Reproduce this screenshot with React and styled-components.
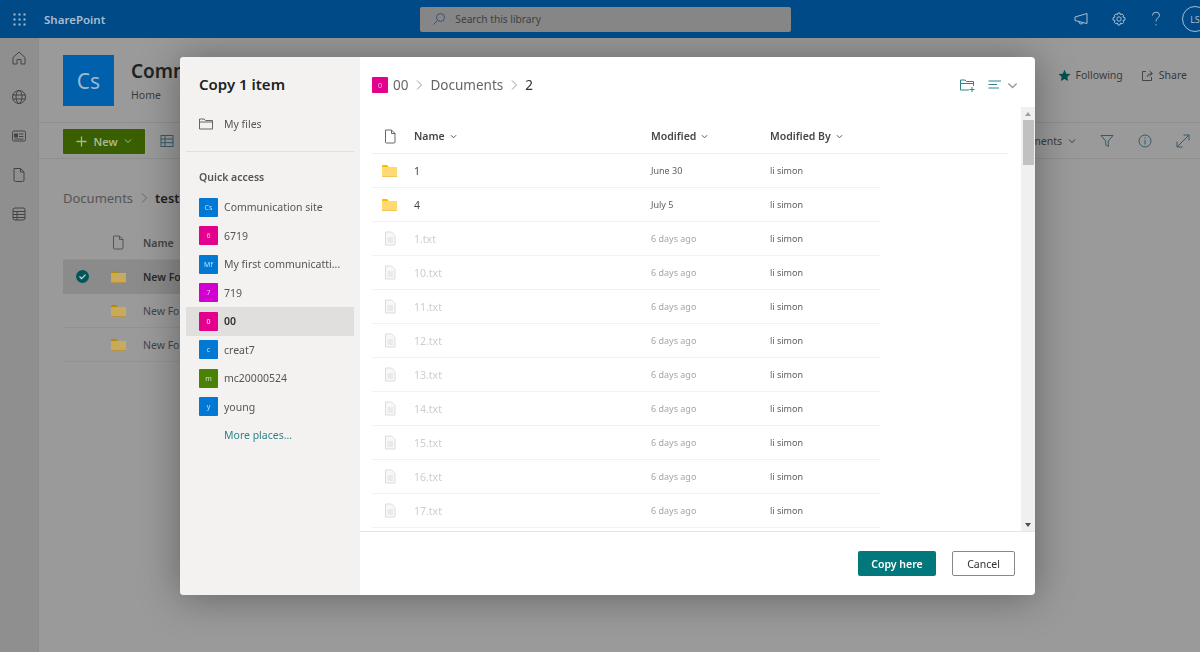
import React from "react";
import styled, { createGlobalStyle } from "styled-components";

const GlobalStyle = createGlobalStyle`
  html, body { margin: 0; padding: 0; height: 100%; overflow: hidden; }
  body { font-family: "Noto Sans", "Open Sans", "Liberation Sans", sans-serif; color: #323130; }
  * { box-sizing: border-box; }
`;

const Page = styled.div`
  width: 1200px;
  height: 652px;
  position: relative;
  overflow: hidden;
  background: #9a9a9a;
  display: flex;
  flex-direction: column;
`;

const TopBar = styled.header`
  height: 38px;
  flex: none;
  background: #004b87;
  display: flex;
  align-items: center;
  position: relative;
  z-index: 2;
  color: #a9bdcf;
`;

const Waffle = styled.div`
  width: 38px;
  display: flex;
  justify-content: center;
`;

const BrandName = styled.span`
  font-size: 11.5px;
  font-weight: 600;
  margin-left: 6px;
`;

const SearchBox = styled.div`
  width: 371px;
  height: 25px;
  margin-left: 315px;
  background: #868686;
  border-radius: 2px;
  display: flex;
  align-items: center;
  gap: 9px;
  padding-left: 12px;
  font-size: 10.2px;
  color: #404040;
`;

const BarActions = styled.div`
  margin-left: auto;
  display: flex;
  align-items: center;
  gap: 23px;
  margin-right: -8px;
`;

const Avatar = styled.div`
  width: 26px;
  height: 26px;
  border-radius: 50%;
  border: 1px solid #a9bdcf;
  font-size: 9px;
  display: flex;
  align-items: center;
  justify-content: center;
  margin-left: -4px;
`;

const Body = styled.div`
  flex: 1;
  display: flex;
  min-height: 0;
`;

const Rail = styled.nav`
  width: 39px;
  flex: none;
  background: #8f8f8f;
  display: flex;
  flex-direction: column;
  align-items: center;
  gap: 23px;
  padding-top: 12px;
  color: #444;
  border-right: 1px solid #8a8a8a;
`;

const Main = styled.main`
  flex: 1;
  min-width: 0;
  display: flex;
  flex-direction: column;
`;

const SiteHeader = styled.div`
  height: 85px;
  flex: none;
  display: flex;
  padding: 17px 13px 0 24px;
  border-bottom: 1px solid #8e8e8e;
`;

const SiteLogo = styled.div`
  width: 51px;
  height: 51px;
  background: #0060ab;
  color: #9fb8cc;
  font-size: 21px;
  display: flex;
  align-items: center;
  justify-content: center;
  flex: none;
`;

const SiteText = styled.div`
  margin-left: 17px;
  display: flex;
  flex-direction: column;
`;

const SiteTitle = styled.div`
  font-size: 19px;
  font-weight: 600;
  color: #222;
  line-height: 30px;
  margin-top: 1px;
  white-space: nowrap;
`;

const SiteNav = styled.div`
  font-size: 10.5px;
  color: #3a3a3a;
  line-height: 18px;
`;

const SiteActions = styled.div`
  margin-left: auto;
  display: flex;
  align-items: flex-start;
  gap: 18px;
  padding-top: 13px;
`;

const SiteAction = styled.span`
  display: flex;
  align-items: center;
  gap: 5px;
  font-size: 10.5px;
  color: #3a3a3a;
`;

const CommandBar = styled.div`
  height: 36px;
  flex: none;
  display: flex;
  align-items: center;
  padding: 1px 10px 0 24px;
  border-bottom: 1px solid #8e8e8e;
  color: #444;
`;

const NewButton = styled.div`
  width: 82px;
  height: 25px;
  background: #3a5f00;
  color: #a8b892;
  font-size: 11px;
  font-weight: 600;
  display: flex;
  align-items: center;
  justify-content: center;
  gap: 6px;
  border-radius: 1px;
  margin-right: 15px;
`;

const CommandRight = styled.div`
  margin-left: auto;
  display: flex;
  align-items: center;
  gap: 24px;
`;

const ViewName = styled.span`
  display: flex;
  align-items: center;
  gap: 6px;
  font-size: 10.5px;
  color: #3a3a3a;
`;

const PageCrumb = styled.div`
  display: flex;
  align-items: center;
  gap: 5px;
  padding: 29px 0 0 24px;
  font-size: 13px;
  line-height: 20px;
  color: #555;
`;

const CrumbStrong = styled.span`
  color: #222;
  font-weight: 600;
`;

const BackList = styled.div`
  margin: 18px 0 0 24px;
  width: 500px;
`;

const BackRow = styled.div`
  height: 34px;
  display: flex;
  align-items: center;
  font-size: 10.5px;
  color: ${(p) => (p.$strong ? "#2a2a2a" : "#444")};
  font-weight: ${(p) => (p.$strong ? 600 : 400)};
  background: ${(p) => (p.$selected ? "#8b8b8b" : "transparent")};
  border-bottom: 1px solid ${(p) => (p.$selected ? "transparent" : "#929292")};
`;

const BackCheck = styled.span`
  width: 48px;
  flex: none;
  display: flex;
  padding-left: 13px;
`;

const BackName = styled.span`
  margin-left: 17px;
`;

const BackHeadIcon = styled.span`
  margin-left: 1px;
  display: flex;
`;

const BackHeadName = styled.span`
  margin-left: 19px;
  font-weight: 600;
`;

const Overlay = styled.div`
  position: fixed;
  inset: 0;
  padding: 57px 165px 57px 180px;
`;

const Dialog = styled.div`
  width: 855px;
  height: 538px;
  display: flex;
  background: #fff;
  border-radius: 4px;
  overflow: hidden;
  box-shadow: 0 2px 40px rgba(0, 0, 0, 0.36);
`;

const Side = styled.aside`
  width: 180px;
  flex: none;
  background: #f3f2f1;
  display: flex;
  flex-direction: column;
  padding: 17px 6px 0;
`;

const DialogTitle = styled.h2`
  margin: 0 0 0 13px;
  font-size: 15px;
  font-weight: 600;
  line-height: 21px;
  color: #201f1e;
`;

const SideLink = styled.div`
  display: flex;
  align-items: center;
  gap: 11px;
  padding-left: 13px;
  margin-top: 17px;
  height: 24px;
  font-size: 10.5px;
  color: #555;
`;

const SideRule = styled.div`
  height: 1px;
  background: #e1dfdd;
  margin-top: 15px;
`;

const SideHeading = styled.div`
  margin: 17px 0 8px 13px;
  line-height: 16px;
  font-size: 10.5px;
  font-weight: 600;
  color: #555;
`;

const Place = styled.div`
  height: 28.5px;
  display: flex;
  align-items: center;
  gap: 6px;
  padding-left: 13px;
  font-size: 10.5px;
  font-weight: ${(p) => (p.$active ? 600 : 400)};
  color: ${(p) => (p.$active ? "#323130" : "#555")};
  background: ${(p) => (p.$active ? "#e1dfdd" : "transparent")};
  white-space: nowrap;
`;

const Tile = styled.span`
  width: ${(p) => p.$size || 19}px;
  height: ${(p) => p.$size || 19}px;
  flex: none;
  background: ${(p) => p.$color};
  color: rgba(255, 255, 255, 0.75);
  font-size: 7px;
  display: flex;
  align-items: center;
  justify-content: center;
  border-radius: 1px;
`;

const MorePlaces = styled.div`
  margin: 6px 0 0 38px;
  font-size: 10.5px;
  line-height: 16px;
  color: #2f8487;
`;

const Content = styled.section`
  flex: 1;
  min-width: 0;
  display: flex;
  flex-direction: column;
`;

const ContentHead = styled.div`
  height: 50px;
  flex: none;
  display: flex;
  align-items: center;
  padding: 6px 17px 0 12px;
`;

const Breadcrumb = styled.div`
  display: flex;
  align-items: center;
  gap: 5px;
  font-size: 13.5px;
  color: #666;
`;

const BreadcrumbLast = styled.span`
  color: #323130;
`;

const HeadTools = styled.div`
  margin-left: auto;
  display: flex;
  align-items: center;
  gap: 13px;
`;

const SortTool = styled.span`
  display: flex;
  align-items: center;
  gap: 5px;
`;

const ListArea = styled.div`
  flex: 1;
  min-height: 0;
  display: flex;
  overflow: hidden;
`;

const ListScroll = styled.div`
  flex: 1;
  min-width: 0;
  overflow: hidden;
  padding: 0 13px 0 12px;
`;

const HeaderRow = styled.div`
  height: 47px;
  display: grid;
  grid-template-columns: 42px 237px 119px 1fr;
  align-items: center;
  border-bottom: 1px solid #f0efee;
  font-size: 10.5px;
  font-weight: 600;
  color: #484644;
  padding-top: 12px;
`;

const HeaderCell = styled.span`
  display: flex;
  align-items: center;
  gap: 5px;
`;

const Row = styled.div`
  width: 508px;
  height: 34px;
  display: grid;
  grid-template-columns: 42px 237px 119px 1fr;
  align-items: center;
  border-bottom: 1px solid #f3f2f1;
`;

const RowIcon = styled.span`
  display: flex;
  padding-left: ${(p) => (p.$file ? 12 : 10)}px;
`;

const RowName = styled.span`
  font-size: 10.5px;
  color: ${(p) => (p.$disabled ? "#cfcdcb" : "#484644")};
`;

const RowMeta = styled.span`
  font-size: 9px;
  color: ${(p) => (p.$disabled ? "#a8a6a4" : "#605e5c")};
`;

const Scrollbar = styled.div`
  width: 14px;
  flex: none;
  background: #f0f0f0;
  display: flex;
  flex-direction: column;
  align-items: center;
`;

const ScrollArrow = styled.span`
  width: 0;
  height: 0;
  border-left: 3px solid transparent;
  border-right: 3px solid transparent;
  margin: 5px 0 4px;
  ${(p) => (p.$down ? "border-top: 4px solid #505050; margin-top: auto;" : "border-bottom: 4px solid #a0a0a0;")}
`;

const ScrollThumb = styled.span`
  width: 11px;
  height: 45px;
  background: #c1c1c1;
`;

const Footer = styled.footer`
  height: 64px;
  flex: none;
  border-top: 1px solid #e6e5e4;
  display: flex;
  align-items: flex-start;
  justify-content: flex-end;
  gap: 16px;
  padding: 19px 20px 0 0;
`;

const PrimaryButton = styled.button`
  width: 78px;
  height: 25px;
  background: #03787c;
  color: #fff;
  border: 0;
  border-radius: 2px;
  font: 600 10.5px "Noto Sans", sans-serif;
`;

const GhostButton = styled.button`
  width: 63px;
  height: 25px;
  background: #fff;
  color: #323130;
  border: 1px solid #8a8886;
  border-radius: 2px;
  font: 400 10.5px "Noto Sans", sans-serif;
`;

const Svg = ({ w = 16, h = 16, vb = "0 0 16 16", c = "currentColor", sw = 1, children }) => (
  <svg width={w} height={h} viewBox={vb} fill="none" stroke={c} strokeWidth={sw} style={{ flex: "none", display: "block" }}>
    {children}
  </svg>
);

const WaffleIcon = () => (
  <svg width="13" height="13" viewBox="0 0 13 13" fill="#a9bdcf">
    {[1.5, 6.5, 11.5].flatMap((y) =>
      [1.5, 6.5, 11.5].map((x) => <rect key={`${x}-${y}`} x={x - 1} y={y - 1} width="2" height="2" />)
    )}
  </svg>
);

const Chevron = ({ size = 8, c = "currentColor" }) => (
  <Svg w={size} h={size} vb="0 0 8 8" c={c}>
    <path d="M1 2.5 L4 5.5 L7 2.5" />
  </Svg>
);

const CrumbArrow = ({ c = "#999" }) => (
  <Svg w={12} h={12} vb="0 0 12 12" c={c}>
    <path d="M4 1.5 L8.5 6 L4 10.5" />
  </Svg>
);

const FileIcon = ({ c = "#666" }) => (
  <Svg w={12} h={15} vb="0 0 12 15" c={c}>
    <path d="M1.5 1 H7.5 L11 4.5 V13 Q11 14 10 14 H2.5 Q1.5 14 1.5 13 Z M7.5 1 V4.5 H11" />
  </Svg>
);

const TextFileIcon = () => (
  <Svg w={12} h={15} vb="0 0 12 15" c="#dddcdb">
    <path d="M1.5 1 H7.5 L11 4.5 V14 H1.5 Z" fill="#f8f8f8" />
    <path d="M3.5 7 H9 M3.5 9 H9 M3.5 11 H9" />
  </Svg>
);

const FolderIcon = ({ dim }) => (
  <svg width="15" height="12" viewBox="0 0 15 12" style={{ display: "block", flex: "none" }}>
    <path d="M0 1 Q0 0 1 0 H5 L7 2 H0 Z" fill={dim ? "#b58a00" : "#ffb900"} />
    <rect x="0" y="2" width="15" height="10" fill={dim ? "#c9a95a" : "#ffd972"} />
    <rect x="0" y="11" width="15" height="1" fill={dim ? "#b8924a" : "#f2c55c"} />
  </svg>
);

const places = [
  { tile: "Cs", name: "Communication site", color: "#0078d4" },
  { tile: "6", name: "6719", color: "#e3008c" },
  { tile: "Mf", name: "My first communicatti...", color: "#0078d4" },
  { tile: "7", name: "719", color: "#d100d1" },
  { tile: "0", name: "00", color: "#e3008c", active: true },
  { tile: "c", name: "creat7", color: "#0078d4" },
  { tile: "m", name: "mc20000524", color: "#498205" },
  { tile: "y", name: "young", color: "#0078d4" },
];

const rows = [
  { name: "1", date: "June 30", folder: true },
  { name: "4", date: "July 5", folder: true },
  ...["1", "10", "11", "12", "13", "14", "15", "16", "17"].map((n) => ({ name: `${n}.txt`, date: "6 days ago" })),
];

export default function App() {
  return (
    <Page>
      <GlobalStyle />
      <TopBar>
        <Waffle><WaffleIcon /></Waffle>
        <BrandName>SharePoint</BrandName>
        <SearchBox>
          <Svg w={14} h={14} vb="0 0 14 14" c="#2f5580">
            <circle cx="8.5" cy="5.5" r="4" />
            <path d="M5.5 8.5 L1.5 12.5" />
          </Svg>
          Search this library
        </SearchBox>
        <BarActions>
          <Svg w={15} h={15} vb="0 0 15 15">
            <path d="M1 5 L13 1.5 V11.5 L1 8.5 Z M5 9.5 Q5 12 7 12 Q9 12 9 10.5" />
          </Svg>
          <Svg w={14} h={14} vb="0 0 14 14">
            <circle cx="7" cy="7" r="2.2" />
            <path d="M6 1 H8 L8.4 2.7 L10 2 L11.6 3.4 L10.9 5 L13 5.8 V8 L11 8.6 L11.7 10.4 L10.2 11.8 L8.5 11 L8 13 H6 L5.5 11 L3.8 11.8 L2.3 10.4 L3 8.6 L1 8 V5.8 L3 5 L2.3 3.4 L4 2 L5.6 2.7 Z" />
          </Svg>
          <Svg w={14} h={16} vb="0 0 14 16">
            <path d="M3.5 4.5 Q3.5 1.2 7 1.2 Q10.5 1.2 10.5 4.2 Q10.5 6 8.6 7 Q7 8 7 10.5 M7 13.2 V14.4" />
          </Svg>
          <Avatar>LS</Avatar>
        </BarActions>
      </TopBar>
      <Body>
        <Rail>
          <Svg>
            <path d="M2 7.5 L8 2 L14 7.5 V14 H10 V9.5 H6 V14 H2 Z" />
          </Svg>
          <Svg>
            <circle cx="8" cy="8" r="6.5" />
            <ellipse cx="8" cy="8" rx="3" ry="6.5" />
            <path d="M1.5 6 H14.5 M1.5 10 H14.5" />
          </Svg>
          <Svg>
            <rect x="1.5" y="3" width="13" height="10" rx="1.5" />
            <rect x="3.5" y="6" width="3" height="3" fill="currentColor" />
            <path d="M8 6 H12.5 M8 8.5 H12.5 M3.5 11 H12.5" />
          </Svg>
          <Svg>
            <path d="M3 1.5 H9.5 L13 5 V13 Q13 14.5 11.5 14.5 H4.5 Q3 14.5 3 13 Z M9.5 1.5 V5 H13" />
          </Svg>
          <Svg>
            <rect x="2" y="2" width="12" height="12" rx="2" />
            <path d="M2 5.5 H14 M2 8.5 H14 M2 11.5 H14 M6 5.5 V14" />
          </Svg>
        </Rail>
        <Main>
          <SiteHeader>
            <SiteLogo>Cs</SiteLogo>
            <SiteText>
              <SiteTitle>Communication site</SiteTitle>
              <SiteNav>Home</SiteNav>
            </SiteText>
            <SiteActions>
              <SiteAction>
                <svg width="13" height="13" viewBox="0 0 24 24" fill="#004f50"><path d="M12 1.5 L15.2 8.6 L23 9.4 L17.2 14.6 L18.8 22.3 L12 18.4 L5.2 22.3 L6.8 14.6 L1 9.4 L8.8 8.6 Z" /></svg>
                Following
              </SiteAction>
              <SiteAction>
                <Svg w={13} h={13} vb="0 0 13 13" c="#444">
                  <path d="M5 2.5 H1.5 V11.5 H10.5 V8 M6 8 Q6.5 4.5 11 4.5 M8.5 2 L11.5 4.5 L8.5 7" />
                </Svg>
                Share
              </SiteAction>
            </SiteActions>
          </SiteHeader>
          <CommandBar>
            <NewButton>
              <Svg w={11} h={11} vb="0 0 11 11" sw={1.3}><path d="M5.5 0.5 V10.5 M0.5 5.5 H10.5" /></Svg>
              New
              <Chevron />
            </NewButton>
            <Svg w={14} h={14} vb="0 0 14 14" c="#37596b">
              <rect x="1" y="1.5" width="12" height="11" />
              <path d="M1 5 H13 M1 8.7 H13 M5 1.5 V12.5" />
            </Svg>
            <CommandRight>
              <ViewName>
                All Documents
                <Chevron />
              </ViewName>
              <Svg w={14} h={14} vb="0 0 14 14" c="#37596b">
                <path d="M1 1.5 H13 L8.3 7 V12.5 L5.7 11 V7 Z" />
              </Svg>
              <Svg w={14} h={14} vb="0 0 14 14" c="#37596b">
                <circle cx="7" cy="7" r="6" />
                <path d="M7 6 V10.5 M7 3.5 V4.8" />
              </Svg>
              <Svg w={14} h={14} vb="0 0 14 14" c="#37596b">
                <path d="M1 13 L13 1 M7.5 1 H13 V6.5 M1 7.5 V13 H6.5" />
              </Svg>
            </CommandRight>
          </CommandBar>
          <PageCrumb>
            Documents
            <CrumbArrow c="#6a6a6a" />
            <CrumbStrong>test</CrumbStrong>
          </PageCrumb>
          <BackList>
            <BackRow>
              <BackCheck />
              <BackHeadIcon><FileIcon c="#555" /></BackHeadIcon>
              <BackHeadName>Name</BackHeadName>
            </BackRow>
            <BackRow $selected $strong>
              <BackCheck>
                <svg width="13" height="13" viewBox="0 0 13 13">
                  <circle cx="6.5" cy="6.5" r="6.5" fill="#035658" />
                  <path d="M3.5 6.5 L5.6 8.6 L9.5 4.6" stroke="#c9d8d8" strokeWidth="1.3" fill="none" />
                </svg>
              </BackCheck>
              <FolderIcon dim />
              <BackName>New Folder</BackName>
            </BackRow>
            <BackRow>
              <BackCheck />
              <FolderIcon dim />
              <BackName>New Folder</BackName>
            </BackRow>
            <BackRow>
              <BackCheck />
              <FolderIcon dim />
              <BackName>New Folder</BackName>
            </BackRow>
          </BackList>
        </Main>
      </Body>
      <Overlay>
        <Dialog>
          <Side>
            <DialogTitle>Copy 1 item</DialogTitle>
            <SideLink>
              <Svg w={14} h={12} vb="0 0 14 12" c="#666">
                <path d="M0.5 1 H5 L6.5 2.5 H13.5 V11 H0.5 Z M0.5 4 H13.5" />
              </Svg>
              My files
            </SideLink>
            <SideRule />
            <SideHeading>Quick access</SideHeading>
            {places.map((p) => (
              <Place key={p.name} $active={p.active}>
                <Tile $color={p.color}>{p.tile}</Tile>
                {p.name}
              </Place>
            ))}
            <MorePlaces>More places...</MorePlaces>
          </Side>
          <Content>
            <ContentHead>
              <Breadcrumb>
                <Tile $color="#e3008c" $size={16}>0</Tile>
                <span>00</span>
                <CrumbArrow />
                Documents
                <CrumbArrow />
                <BreadcrumbLast>2</BreadcrumbLast>
              </Breadcrumb>
              <HeadTools>
                <Svg w={15} h={13} vb="0 0 15 13" c="#2f8487">
                  <path d="M0.5 1 H5 L6.5 2.5 H13.5 V7 M0.5 1 V11 H9 M0.5 4.5 H13.5 M12 8 V13 M9.5 10.5 H14.5" />
                </Svg>
                <SortTool>
                  <Svg w={14} h={12} vb="0 0 14 12" c="#2f8487">
                    <path d="M0.5 2 H13 M0.5 5.5 H9 M0.5 9 H11" />
                  </Svg>
                  <Chevron size={11} c="#999" />
                </SortTool>
              </HeadTools>
            </ContentHead>
            <ListArea>
              <ListScroll>
                <HeaderRow>
                  <RowIcon $file><FileIcon /></RowIcon>
                  <HeaderCell>Name <Chevron size={7} /></HeaderCell>
                  <HeaderCell>Modified <Chevron size={7} /></HeaderCell>
                  <HeaderCell>Modified By <Chevron size={7} /></HeaderCell>
                </HeaderRow>
                {rows.map((r) => (
                  <Row key={r.name}>
                    <RowIcon $file={!r.folder}>{r.folder ? <FolderIcon /> : <TextFileIcon />}</RowIcon>
                    <RowName $disabled={!r.folder}>{r.name}</RowName>
                    <RowMeta $disabled={!r.folder}>{r.date}</RowMeta>
                    <RowMeta>li simon</RowMeta>
                  </Row>
                ))}
              </ListScroll>
              <Scrollbar>
                <ScrollArrow />
                <ScrollThumb />
                <ScrollArrow $down />
              </Scrollbar>
            </ListArea>
            <Footer>
              <PrimaryButton>Copy here</PrimaryButton>
              <GhostButton>Cancel</GhostButton>
            </Footer>
          </Content>
        </Dialog>
      </Overlay>
    </Page>
  );
}
